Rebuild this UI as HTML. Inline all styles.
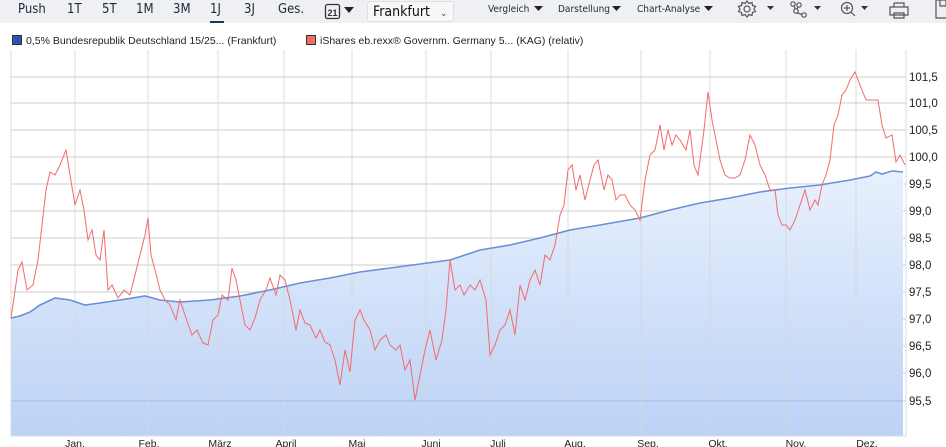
<!DOCTYPE html>
<html><head><meta charset="utf-8"><style>
body{margin:0;width:946px;height:447px;overflow:hidden;background:#fff;font-family:"Liberation Sans",sans-serif;position:relative}
.tb{position:absolute;left:0;top:0;width:946px;height:23px;background:#eef0f3}
.t{position:absolute;top:2px;font-size:13px;color:#1c2a3a;font-family:"DejaVu Sans Condensed","Liberation Sans",sans-serif}
.s{position:absolute;top:4px;font-size:10px;color:#1c2a3a;font-family:"DejaVu Sans Condensed","Liberation Sans",sans-serif}
.ff{position:absolute;left:367px;top:1px;width:87px;height:21px;background:#f7f7f7;border:1px solid #dde0e4;border-radius:3px;box-sizing:border-box;font-size:14px;padding:2px 5px;color:#111;font-family:"DejaVu Sans Condensed","Liberation Sans",sans-serif}
.leg{position:absolute;top:35px;font-size:10.5px;color:#222}
.box{display:inline-block;width:8px;height:8px;border:1px solid #333;vertical-align:-1px;margin-right:4px}
</style></head><body>
<div class="tb"></div>
<div class="t" style="left:18px">Push</div>
<div class="t" style="left:67px">1T</div>
<div class="t" style="left:102px">5T</div>
<div class="t" style="left:136px">1M</div>
<div class="t" style="left:173px">3M</div>
<div class="t" style="left:210px">1J</div>
<div style="position:absolute;left:210px;top:21px;width:14px;height:2px;background:#1c3a5a"></div>
<div class="t" style="left:244px">3J</div>
<div class="t" style="left:278px">Ges.</div>
<svg style="position:absolute;left:324px;top:2px" width="40" height="20"><rect x="1.5" y="2.5" width="14" height="14" rx="2" fill="none" stroke="#333" stroke-width="1.3"/><text x="8.5" y="14" font-size="9" font-weight="bold" text-anchor="middle" fill="#333" font-family="Liberation Sans">21</text><path d="M20 5h10l-5 6z" fill="#222"/></svg>
<div class="ff">Frankfurt <span style="font-size:10px;color:#555;margin-left:6px">&#8964;</span></div>
<div class="s" style="left:488px">Vergleich</div><svg style="position:absolute;left:534px;top:5px" width="10" height="8"><path d="M0 1h9l-4.5 5z" fill="#222"/></svg>
<div class="s" style="left:558px">Darstellung</div><svg style="position:absolute;left:612px;top:5px" width="10" height="8"><path d="M0 1h9l-4.5 5z" fill="#222"/></svg>
<div class="s" style="left:637px">Chart-Analyse</div><svg style="position:absolute;left:704px;top:5px" width="10" height="8"><path d="M0 1h9l-4.5 5z" fill="#222"/></svg>
<svg style="position:absolute;left:730px;top:0" width="216" height="22" fill="none" stroke="#555" stroke-width="1.2">
<circle cx="17" cy="9" r="3"/><path d="M17 1l2 2.5 3-1 .5 3 3 1-1.5 2.5 1.5 2.5-3 1-.5 3-3-1-2 2.5-2-2.5-3 1-.5-3-3-1 1.5-2.5-1.5-2.5 3-1 .5-3 3 1z"/>
<path d="M37 6h7l-3.5 4z" fill="#333" stroke="none"/>
<circle cx="63" cy="4" r="2.2"/><circle cx="69" cy="5" r="2.2"/><circle cx="66" cy="11" r="2.2"/><circle cx="74" cy="15" r="2.2"/><path d="M64 6l1.5 3M68 7l-1 2M67.5 13l4.5 1.5"/>
<path d="M84 6h7l-3.5 4z" fill="#333" stroke="none"/>
<circle cx="117" cy="8" r="5.5"/><path d="M114 8h6M117 5v6M121 12l4 4"/>
<path d="M131 6h7l-3.5 4z" fill="#333" stroke="none"/>
<path d="M164 3h10v4M164 7v-4M160 7h18v8h-18zM164 13h10v5h-10z"/>
<path d="M206 0v18h12M206 0h12M210 0v6h6v-6"/>
</svg>
<div class="leg" style="left:12px"><span class="box" style="background:#2856b0"></span>0,5% Bundesrepublik Deutschland 15/25... (Frankfurt)</div>
<div class="leg" style="left:306px"><span class="box" style="background:#f36c6c"></span>iShares eb.rexx® Governm. Germany 5... (KAG) (relativ)</div>
<svg style="position:absolute;left:0;top:0" width="946" height="447">
<defs><linearGradient id="g" x1="0" y1="170" x2="0" y2="436" gradientUnits="userSpaceOnUse"><stop offset="0" stop-color="#e8f0fd"/><stop offset="1" stop-color="#bcd2f6"/></linearGradient></defs>
<rect x="11" y="50" width="895" height="386" fill="#fff"/>
<g stroke="#e6e6e6" stroke-width="2"><path d="M11 77h895M11 103h895M11 130h895M11 157h895M11 184h895M11 211h895M11 238h895M11 265h895M11 292h895M11 319h895M11 346h895M11 373h895M11 401h895"/></g>
<polygon fill="url(#g)" points="11,436 11,318 20,316 30,312 40,305 55,298 70,300 85,305 100,303 120,300 145,296 160,300 180,302 210,300 240,296 270,290 300,283 330,278 360,272 390,268 420,264 450,260 480,250 510,245 540,238 570,230 600,225 640,218 670,210 700,203 730,198 760,192 790,188 820,185 850,180 860,178 870,176 876,172 882,174 892,171 903,172 903,436"/>
<path d="M11 401h892" stroke="#b3c8ec" stroke-width="2"/>
<g stroke="#d6d6d6" stroke-width="1" opacity="0.8"><path d="M75 50v386M148 50v386M218 50v386M284 50v386M352 50v386M426 50v386M491 50v386M568 50v386M641 50v386M710 50v386M786 50v386M856 50v386"/></g>
<path d="M906 50v386M11 50v386" stroke="#ddd"/>
<path d="M11 436h895" stroke="#ddd"/>
<polyline fill="none" stroke="#6b8fd6" stroke-width="1.6" points="11,318 20,316 30,312 40,305 55,298 70,300 85,305 100,303 120,300 145,296 160,300 180,302 210,300 240,296 270,290 300,283 330,278 360,272 390,268 420,264 450,260 480,250 510,245 540,238 570,230 600,225 640,218 670,210 700,203 730,198 760,192 790,188 820,185 850,180 860,178 870,176 876,172 882,174 892,171 903,172"/>
<polyline fill="none" stroke="#f26b6b" stroke-width="1" points="11,318 18,270 22,262 27,290 33,285 38,260 42,225 46,190 50,172 55,175 60,165 66,150 70,175 75,205 80,190 84,210 88,240 92,230 96,255 100,260 104,230 108,290 112,285 118,298 124,290 130,295 135,275 140,255 145,235 148,218 151,255 155,270 160,290 165,300 170,305 176,320 180,300 186,318 192,335 197,330 203,343 208,345 213,320 218,315 222,295 228,300 232,268 236,280 240,300 245,325 250,330 255,318 260,300 266,290 270,278 276,295 280,275 285,280 290,300 296,330 300,310 305,323 310,325 316,338 320,330 325,342 330,345 335,360 340,385 345,350 350,372 355,320 360,310 364,320 370,330 375,350 380,340 386,335 390,345 396,350 400,345 405,370 410,360 415,400 420,375 425,350 430,330 436,360 442,340 446,310 450,260 455,290 460,285 464,295 470,285 475,290 480,280 486,300 490,355 495,345 500,330 505,325 510,310 515,335 520,285 525,300 530,280 535,270 540,285 545,255 550,260 555,245 560,215 564,205 568,170 572,165 576,190 580,175 585,200 590,180 594,165 598,160 604,190 608,175 612,180 616,200 620,195 625,195 630,205 635,210 640,220 645,180 650,155 655,150 660,125 664,150 668,130 672,145 676,135 680,140 686,150 690,130 694,165 698,175 704,130 708,92 712,120 716,140 720,160 725,175 730,178 735,178 740,175 745,160 750,135 755,145 760,165 765,175 770,190 775,190 778,215 782,225 786,225 790,230 795,220 800,205 805,190 810,210 815,200 818,205 822,185 826,175 830,160 834,125 838,115 842,95 846,90 850,80 855,72 860,85 866,100 872,100 878,100 882,125 886,138 892,135 896,162 900,155 905,165"/>
<g font-size="11.5" fill="#222" font-family="Liberation Sans"><text x="909" y="81">101,5</text><text x="909" y="107">101,0</text><text x="909" y="134">100,5</text><text x="909" y="161">100,0</text><text x="909" y="188">99,5</text><text x="909" y="215">99,0</text><text x="909" y="242">98,5</text><text x="909" y="269">98,0</text><text x="909" y="296">97,5</text><text x="909" y="323">97,0</text><text x="909" y="350">96,5</text><text x="909" y="377">96,0</text><text x="909" y="405">95,5</text></g>
<g font-size="10.5" fill="#222" text-anchor="middle" font-family="Liberation Sans"><text x="75" y="447">Jan.</text><text x="149" y="447">Feb.</text><text x="220" y="447">März</text><text x="286" y="447">April</text><text x="357" y="447">Mai</text><text x="431" y="447">Juni</text><text x="498" y="447">Juli</text><text x="575" y="447">Aug.</text><text x="648" y="447">Sep.</text><text x="718" y="447">Okt.</text><text x="796" y="447">Nov.</text><text x="867" y="447">Dez.</text></g>
</svg>
</body></html>
